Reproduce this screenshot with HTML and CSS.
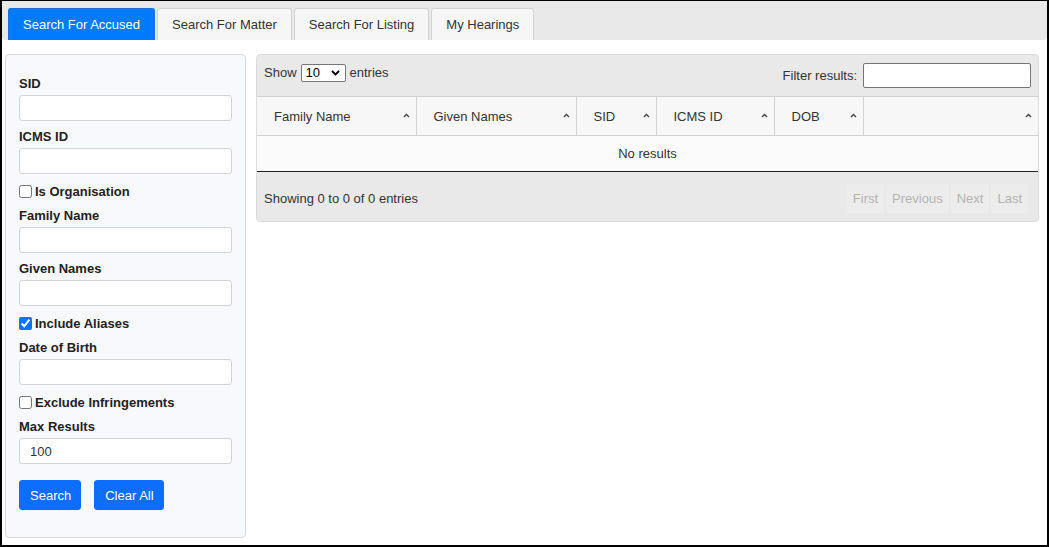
FILE: index.html
```html
<!DOCTYPE html>
<html lang="en">
<head>
<meta charset="utf-8">
<title>Search For Accused</title>
<link rel="stylesheet" href="styles.css">
</head>
<body>
<div class="frame">
  <nav class="tabbar">
    <a class="tab active">Search For Accused</a>
    <a class="tab">Search For Matter</a>
    <a class="tab">Search For Listing</a>
    <a class="tab">My Hearings</a>
  </nav>
  <div class="main">
    <form class="filters">
      <label class="lbl">SID</label>
      <input class="field" type="text">
      <label class="lbl">ICMS ID</label>
      <input class="field" type="text">
      <label class="check"><input type="checkbox">Is Organisation</label>
      <label class="lbl">Family Name</label>
      <input class="field" type="text">
      <label class="lbl">Given Names</label>
      <input class="field" type="text">
      <label class="check"><input type="checkbox" checked>Include Aliases</label>
      <label class="lbl">Date of Birth</label>
      <input class="field" type="text">
      <label class="check"><input type="checkbox">Exclude Infringements</label>
      <label class="lbl">Max Results</label>
      <input class="field" type="text" value="100">
      <div class="buttons">
        <button type="button" class="btn">Search</button>
        <button type="button" class="btn">Clear All</button>
      </div>
    </form>
    <section class="results">
      <div class="controls">
        <div class="length">Show
          <span class="selectwrap">
            <select class="sel"><option>10</option><option>25</option><option>50</option></select>
            <svg class="selarrow" width="9" height="6" viewBox="0 0 9 6"><path d="M1 1l3.5 3.5L8 1" fill="none" stroke="#000" stroke-width="1.8"/></svg>
          </span>
          entries</div>
        <div class="filter">Filter results: <input class="filterinput" type="text"></div>
      </div>
      <table class="grid">
        <colgroup>
          <col class="c1"><col class="c2"><col class="c3"><col class="c4"><col class="c5"><col class="c6">
        </colgroup>
        <thead>
          <tr>
            <th><span>Family Name</span><svg class="caret" width="7" height="5" viewBox="0 0 7 5"><path d="M1 4l2.5-2.5L6 4" fill="none" stroke="#444" stroke-width="1.4"/></svg></th>
            <th><span>Given Names</span><svg class="caret" width="7" height="5" viewBox="0 0 7 5"><path d="M1 4l2.5-2.5L6 4" fill="none" stroke="#444" stroke-width="1.4"/></svg></th>
            <th><span>SID</span><svg class="caret" width="7" height="5" viewBox="0 0 7 5"><path d="M1 4l2.5-2.5L6 4" fill="none" stroke="#444" stroke-width="1.4"/></svg></th>
            <th><span>ICMS ID</span><svg class="caret" width="7" height="5" viewBox="0 0 7 5"><path d="M1 4l2.5-2.5L6 4" fill="none" stroke="#444" stroke-width="1.4"/></svg></th>
            <th><span>DOB</span><svg class="caret" width="7" height="5" viewBox="0 0 7 5"><path d="M1 4l2.5-2.5L6 4" fill="none" stroke="#444" stroke-width="1.4"/></svg></th>
            <th><span></span><svg class="caret" width="7" height="5" viewBox="0 0 7 5"><path d="M1 4l2.5-2.5L6 4" fill="none" stroke="#444" stroke-width="1.4"/></svg></th>
          </tr>
        </thead>
        <tbody>
          <tr><td colspan="6" class="empty">No results</td></tr>
        </tbody>
      </table>
      <div class="footer">
        <div class="info">Showing 0 to 0 of 0 entries</div>
        <div class="paging">
          <span class="pg">First</span><span class="pg">Previous</span><span class="pg">Next</span><span class="pg">Last</span>
        </div>
      </div>
    </section>
  </div>
</div>
</body>
</html>
```
FILE: styles.css
```css
* { box-sizing: border-box; }
html, body { margin: 0; padding: 0; background: #fff; }
body {
  font-family: "Liberation Sans", Arial, sans-serif;
  font-size: 13px;
  color: #333;
}
.frame {
  width: 1049px;
  height: 547px;
  border-style: solid;
  border-color: #000;
  border-width: 1px 2px 2px 2px;
  overflow: hidden;
}
.tabbar {
  display: flex;
  gap: 2px;
  height: 39px;
  padding: 7px 6px 0 6px;
  background: #e9e9e9;
  border-radius: 0 0 3px 3px;
}
.tab {
  display: flex;
  align-items: center;
  height: 32px;
  padding: 0 14px;
  background: #f6f6f6;
  border: 1px solid #d2d2d2;
  border-bottom: none;
  border-radius: 3px 3px 0 0;
  color: #333;
  font-size: 13px;
  cursor: pointer;
}
.tab.active {
  background: #007bff;
  border-color: #1a6fd8;
  color: #fff;
}
.main {
  display: flex;
  align-items: flex-start;
  gap: 10px;
  padding: 14px 8px 0 3px;
}
.filters {
  width: 241px;
  flex: none;
  display: flex;
  flex-direction: column;
  padding: 21px 13px 27px 13px;
  background: #f8f9fc;
  border: 1px solid #d7d7d7;
  border-radius: 4px;
  margin: 0;
}
.lbl {
  display: block;
  font-weight: bold;
  line-height: 16px;
  height: 16px;
  margin-bottom: 3px;
  color: #222;
}
.field {
  display: block;
  width: 100%;
  height: 26px;
  margin: 0 0 8px 0;
  padding: 0 10px;
  border: 1px solid #d4d4d4;
  border-radius: 3px;
  background: #fff;
  font-family: inherit;
  font-size: 13px;
  color: #333;
}
.check {
  display: flex;
  align-items: center;
  height: 18px;
  margin-bottom: 8px;
  font-weight: bold;
  color: #222;
}
.check input {
  width: 13px;
  height: 13px;
  margin: 0 3px 0 0;
  accent-color: #0075ff;
}
.buttons {
  display: flex;
  gap: 13px;
  margin-top: 8px;
}
.btn {
  height: 30px;
  padding: 0 9px 0 10px;
  background: #0d6efd;
  border: 1px solid #0d6efd;
  border-radius: 3px;
  color: #fff;
  font-family: inherit;
  font-size: 13px;
  cursor: pointer;
}
.results {
  flex: 1;
  background: #e9e9e9;
  border: 1px solid #dcdcdc;
  border-radius: 4px;
}
.controls {
  display: flex;
  justify-content: space-between;
  align-items: center;
  height: 41px;
  padding: 0 7px 0 7px;
}
.length {
  display: flex;
  align-items: center;
  gap: 4px;
  margin-top: -6px;
}
.selectwrap {
  position: relative;
  display: inline-block;
}
.sel {
  appearance: none;
  -webkit-appearance: none;
  width: 45px;
  height: 18px;
  padding: 0 0 0 4px;
  border: 1px solid #767676;
  border-radius: 2px;
  background: #fff;
  font-family: inherit;
  font-size: 13px;
  color: #000;
  display: block;
}
.selarrow {
  position: absolute;
  right: 6px;
  top: 6px;
  pointer-events: none;
}
.filter {
  display: flex;
  align-items: center;
  gap: 6px;
  margin-top: -1px;
}
.filterinput {
  width: 168px;
  height: 25px;
  border: 1px solid #767676;
  border-radius: 2px;
  background: #fff;
}
.grid {
  width: 100%;
  border-collapse: collapse;
  table-layout: fixed;
}
.c1 { width: 159px; }
.c2 { width: 160px; }
.c3 { width: 80px; }
.c4 { width: 118px; }
.c5 { width: 89px; }
.c6 { width: 175px; }
.grid th {
  position: relative;
  height: 39px;
  padding: 0 0 0 17px;
  text-align: left;
  font-weight: normal;
  background: #f7f7f7;
  border-top: 1px solid #d2d2d2;
  border-bottom: 1px solid #d2d2d2;
  border-right: 1px solid #d2d2d2;
  color: #333;
}
.grid th:last-child { border-right: none; }
.caret {
  position: absolute;
  right: 6px;
  top: 16px;
}
.empty {
  height: 36px;
  text-align: center;
  background: #fbfbfb;
  border-bottom: 1px solid #222;
  color: #333;
}
.footer {
  display: flex;
  justify-content: space-between;
  align-items: center;
  height: 49px;
  padding: 4px 10px 0 7px;
}
.paging {
  display: flex;
  gap: 2px;
}
.pg {
  display: flex;
  align-items: center;
  height: 29px;
  padding: 0 6px;
  background: #ececec;
  border-radius: 2px;
  color: #b3b3b3;
  font-size: 13px;
}
```
